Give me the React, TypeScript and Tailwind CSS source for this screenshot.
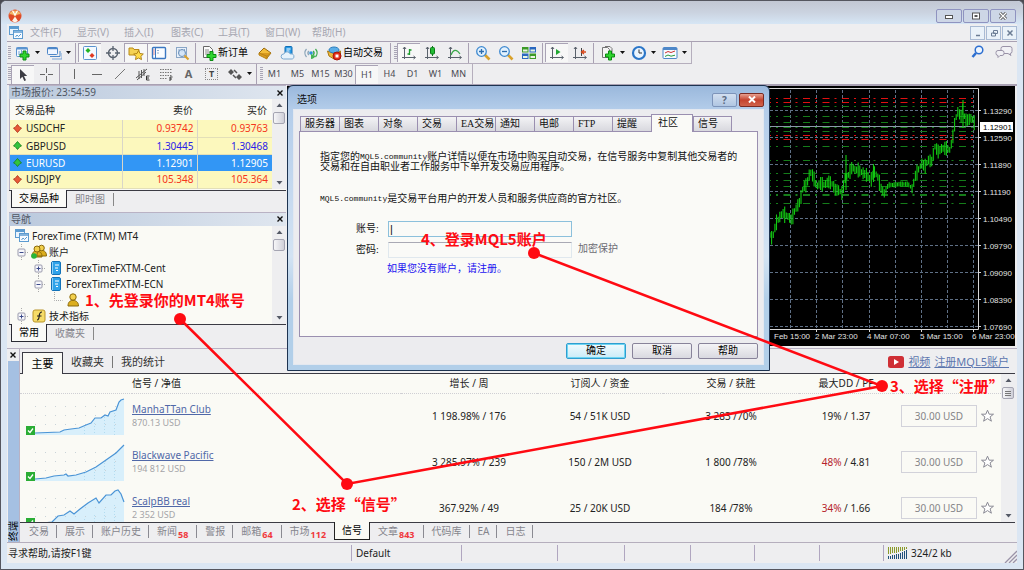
import React from 'react';

type Kids = { children?: React.ReactNode };

/* ---------- small drawing helpers ---------- */

function Ic({ children }: Kids) {
  return (
    <svg width="16" height="16" viewBox="0 0 16 16" fill="none" className="shrink-0" aria-hidden="true">
      {children}
    </svg>
  );
}

const Plus = ({ x, y }: { x: number; y: number }) => (
  <path
    d={`M${x - 1.5} ${y - 4.5}h3v3h3v3h-3v3h-3v-3h-3v-3h3z`}
    fill="#2fd52f"
    stroke="#0b8a12"
    strokeWidth="1"
  />
);

const NewChart = () => (
  <Ic>
    <rect x="1.5" y="2.5" width="11" height="9" rx="1" fill="#f4f9ff" stroke="#5a93cf" />
    <path d="M1.5 3.5h11" stroke="#5a93cf" strokeWidth="2" />
    <path d="M4 10V6M6.500 9V5" stroke="#7aa7d8" />
    <Plus x={9.500} y={10.500} />
  </Ic>
);
const Profiles = () => (
  <Ic>
    <rect x="1.500" y="2.500" width="10" height="7" rx="1" fill="#eef5ff" stroke="#4d87c8" />
    <path d="M1.500 3.500h10" stroke="#4d87c8" strokeWidth="1.500" />
    <path d="M4 11.500h10V6" stroke="#4d87c8" />
    <path d="M6 14h10V8" stroke="#7ba5d6" />
  </Ic>
);
const Quotes = () => (
  <Ic>
    <rect x="1.500" y="1.500" width="13" height="13" rx="1" fill="#f5faff" stroke="#5a93cf" />
    <path d="M6 3l2.500 2.500L6 8 3.500 5.500z" fill="#22b322" />
    <path d="M10 8l2.500 2.500L10 13 7.500 10.500z" fill="#e03a22" />
  </Ic>
);
const Target = () => (
  <Ic>
    <circle cx="8" cy="8" r="4.500" stroke="#5b6470" strokeWidth="1.500" />
    <path d="M8 1v5M8 10v5M1 8h5M10 8h5" stroke="#5b6470" strokeWidth="1.300" />
  </Ic>
);
const FolderStar = () => (
  <Ic>
    <path d="M1 3h4l1 1.500h5V10H1z" fill="#f5d254" stroke="#b98a17" />
    <path d="M10.500 5.500l1.500 3 3.300.5-2.400 2.300.6 3.300-3-1.600-3 1.600.6-3.300L5.700 9l3.300-.5z" fill="#ffdc4a" stroke="#a97a10" strokeWidth=".9" />
  </Ic>
);
const TermIcon = () => (
  <Ic>
    <rect x="1.500" y="2.500" width="13" height="11" rx="1" fill="#fafdff" stroke="#3b78c2" strokeWidth="1.400" />
    <path d="M4.500 3v10" stroke="#3b78c2" />
    <path d="M2.500 5h1M2.500 7h1M2.500 9h1" stroke="#d33" />
    <path d="M6.500 5.500h1M6.500 8h1" stroke="#2c5b9b" />
  </Ic>
);
const Tester = () => (
  <Ic>
    <rect x="2.500" y="2.500" width="10" height="10" fill="#e9f1fa" stroke="#8aa6c6" />
    <path d="M5 4v5M8 4v3M10.500 4v4" stroke="#8aa6c6" />
    <circle cx="8" cy="8" r="3.500" fill="#cfe3f7" fillOpacity=".8" stroke="#6b8fb8" />
    <path d="M10.500 10.500l4 4" stroke="#dba12b" strokeWidth="2.200" />
  </Ic>
);
const NewOrder = () => (
  <Ic>
    <path d="M2.500 1.500h6l3 3v8h-9z" fill="#fbfbfb" stroke="#666" />
    <path d="M4 5h4M4 7h5M4 9h4" stroke="#888" />
    <Plus x={10.500} y={11} />
  </Ic>
);
const Gold = () => (
  <Ic>
    <path d="M2 8l5-5 7 5-4 5z" fill="#f2bd3c" stroke="#9a6b10" />
    <path d="M2 8l8 3.200L14 8M2 8v2l8 4v-3" stroke="#b98317" fill="#d99a20" />
  </Ic>
);
const Cloud = () => (
  <Ic>
    <rect x="5" y="1.500" width="7" height="8" rx="1" fill="#2a9be6" stroke="#0f6db5" />
    <path d="M6.500 4h4M6.500 6h3" stroke="#fff" />
    <path d="M3.500 14a2.500 2.500 0 01.3-5 3.500 3.500 0 016.500 0 2.500 2.500 0 012 5z" fill="#e6f2fb" stroke="#7aa8cf" />
  </Ic>
);
const Signal = () => (
  <Ic>
    <path d="M3.500 12a6 6 0 010-8M5.800 10a3 3 0 010-4" stroke="#8aa4b8" strokeWidth="1.300" />
    <path d="M12.500 12a6 6 0 000-8M10.200 10a3 3 0 000-4" stroke="#3aa84a" strokeWidth="1.300" />
    <circle cx="8" cy="8" r="1.800" fill="#2f93d8" />
    <path d="M8 9v5c2 0 4-1.500 4.500-3z" fill="#46b454" />
  </Ic>
);
const AutoTrade = () => (
  <Ic>
    <path d="M1.500 6L8 8.500 14.500 6v4L8 14 3 11z" fill="#f0b93a" stroke="#a87814" />
    <ellipse cx="8" cy="5" rx="5" ry="3" fill="#5aaee8" stroke="#2b7dbd" />
    <circle cx="11" cy="11" r="4" fill="#e32e1a" stroke="#a81508" />
    <rect x="9.500" y="9.500" width="3" height="3" fill="#fff" />
  </Ic>
);
const Axes = ({ children }: Kids) => (
  <Ic>
    <path d="M3.500 2v12M1 12.500h13M2 4l1.500-2L5 4M12.500 11l2 1.500-2 1.500" stroke="#59616b" />
    {children}
  </Ic>
);
const ZoomIc = ({ plus }: { plus?: boolean }) => (
  <Ic>
    <path d="M9.500 9.500l5 5" stroke="#d9a12a" strokeWidth="2.600" />
    <circle cx="6.500" cy="6.500" r="4.800" fill="#e2f1fd" stroke="#3f8ad0" strokeWidth="1.300" />
    <path d={plus ? 'M4 6.500h5M6.500 4v5' : 'M4 6.500h5'} stroke="#2c6cae" strokeWidth="1.300" />
  </Ic>
);
const Tile = () => (
  <Ic>
    <path d="M1 2h6.500v5.500H1zM8.500 8.500H15V14H8.500z" fill="#3c9a28" />
    <path d="M8.500 2H15v5.500H8.500zM1 8.500h6.500V14H1z" fill="#2a68c0" />
    <path d="M2 4.500h4.500v2H2zM9.500 4.500H14v2H9.500zM2 11h4.500v2H2zM9.500 11H14v2H9.500z" fill="#eaf5e4" />
  </Ic>
);
const Indicators = () => (
  <Ic>
    <path d="M2.500 2.500h5l2 2v8h-7z" fill="#f5f5f5" stroke="#777" />
    <path d="M5 1.500h5l2 2v6" stroke="#777" />
    <Plus x={10} y={10.500} />
  </Ic>
);
const Clock = () => (
  <Ic>
    <circle cx="8" cy="8" r="6" fill="#eaf5ff" stroke="#2b76c8" strokeWidth="2.200" />
    <path d="M8 4.500V8h3" stroke="#333" />
  </Ic>
);
const Template = () => (
  <Ic>
    <rect x="1" y="2.500" width="14" height="11" rx="1" fill="#f7fbff" stroke="#4d87c8" />
    <path d="M1 4h14" stroke="#4d87c8" strokeWidth="2" />
    <path d="M3 8l3-1.500 3 1 4-1.500" stroke="#c33" />
    <path d="M3 11.500l3-1.500 3 1.200 4-1" stroke="#2a9a3a" />
  </Ic>
);
const WinStack = () => (
  <Ic>
    <rect x="1.500" y="1.500" width="9" height="8" fill="#eaf4fd" stroke="#5c9bd0" />
    <path d="M1.500 3h9" stroke="#5c9bd0" strokeWidth="2" />
    <rect x="5.500" y="5.500" width="9" height="8" fill="#f7fbff" stroke="#5c9bd0" />
    <path d="M5.500 7h9" stroke="#5c9bd0" strokeWidth="1.500" />
    <path d="M7.500 12l1.500-2 1.500 1.500L13 9" stroke="#5c9bd0" />
  </Ic>
);

/* ---------- toolbars ---------- */

function Tool({ label, pressed, children }: Kids & { label: string; pressed?: boolean }) {
  return (
    <button
      type="button"
      aria-label={label}
      className={
        'flex h-[19px] w-[23px] shrink-0 items-center justify-center text-[9px] text-[#4a4a52] ' +
        (pressed ? 'border-t border-l border-[#a9a3b5] bg-[#f7f7f7]' : '')
      }
    >
      {children}
    </button>
  );
}
const Caret = () => (
  <svg width="8" height="4" viewBox="0 0 8 4" className="shrink-0" aria-hidden="true">
    <path d="M1 0h5L3.500 3z" fill="#111" />
  </svg>
);
const Sep = () => (
  <span className="flex h-5 w-[5px] shrink-0 justify-center">
    <span className="w-px bg-[#a9a1b3]" />
  </span>
);
const Grip = () => (
  <svg width="4" height="16" viewBox="0 0 4 16" className="shrink-0" aria-hidden="true">
    <path d="M2.500 1v14" stroke="#a9a5b5" strokeWidth="3" strokeDasharray="1 1" />
  </svg>
);

function Toolbars() {
  return (
    <div className="border-t border-b border-[#a9a1b3]">
      <div className="flex h-[22px] w-max items-center border-r border-b border-[#b5aebd] pr-0.5">
        <Grip />
        <Tool label="新图表"><NewChart /></Tool>
        <Caret />
        <Tool label="配置文件"><Profiles /></Tool>
        <Caret />
        <Sep />
        <Tool label="市场报价" pressed><Quotes /></Tool>
        <Tool label="数据窗口"><Target /></Tool>
        <Tool label="导航" pressed><FolderStar /></Tool>
        <Tool label="终端" pressed><TermIcon /></Tool>
        <Tool label="策略测试"><Tester /></Tool>
        <Sep />
        <button type="button" className="flex w-[55px] shrink-0 items-center gap-px pl-[3px] text-[10px] text-black">
          <NewOrder />
          <span className="whitespace-nowrap">新订单</span>
        </button>
        <Tool label="MetaEditor"><Gold /></Tool>
        <Tool label="MQL5"><Cloud /></Tool>
        <Tool label="信号服务"><Signal /></Tool>
        <button type="button" className="flex w-[66px] shrink-0 items-center gap-px pl-1 text-[10px] text-black">
          <AutoTrade />
          <span className="whitespace-nowrap">自动交易</span>
        </button>
        <Sep />
        <Grip />
        <Tool label="柱状图" pressed><Axes><path d="M8.500 4v6M8.500 5h2M6.500 9h2" stroke="#1a9c2a" strokeWidth="1.300" /></Axes></Tool>
        <Tool label="阴阳烛"><Axes><path d="M8.500 1v10" stroke="#0c7a18" /><rect x="6.500" y="2.500" width="4" height="6.500" rx="1" fill="#22bb33" stroke="#0c7a18" /></Axes></Tool>
        <Tool label="折线图"><Axes><path d="M4 10c2-5 5-7 9-1" stroke="#3aa84a" strokeWidth="1.200" /></Axes></Tool>
        <Sep />
        <Tool label="放大"><ZoomIc plus /></Tool>
        <Tool label="缩小"><ZoomIc /></Tool>
        <Tool label="平铺窗口"><Tile /></Tool>
        <Sep />
        <Tool label="自动滚动" pressed><Axes><path d="M7 4l4.500 3L7 10z" fill="#22a833" /></Axes></Tool>
        <Tool label="图表平移"><Axes><path d="M9.500 3v8" stroke="#444" /><path d="M14 7h-4M12 5L9.500 7l2.500 2" stroke="#d9491c" strokeWidth="1.300" /></Axes></Tool>
        <Sep />
        <Tool label="指标"><Indicators /></Tool>
        <Caret />
        <Tool label="周期"><Clock /></Tool>
        <Caret />
        <Tool label="模板"><Template /></Tool>
        <Caret />
      </div>
      <div className="flex h-5 w-max items-center border-r border-[#b5aebd] pr-0.5">
        <Grip />
        <Tool label="光标" pressed><Ic><path d="M5 2v10l2.400-2.300L9.300 14l1.700-.8-2-4.100h3.200z" fill="#3c3c44" /></Ic></Tool>
        <Tool label="十字"><Ic><path d="M8.500 2v5M8.500 10v5M2 8.500h5M10 8.500h5" stroke="#666" /></Ic></Tool>
        <Sep />
        <Tool label="垂直线"><Ic><path d="M8.500 3v10" stroke="#666" /></Ic></Tool>
        <Tool label="水平线"><Ic><path d="M3 8.500h10" stroke="#666" /></Ic></Tool>
        <Tool label="趋势线"><Ic><path d="M3 13L13 3" stroke="#777" /></Ic></Tool>
        <Tool label="通道"><Ic><path d="M1 12l11-9M2 14l9-8M4 5v8M6.500 4v8M9 3v7" stroke="#555" /><path d="M14.500 10h-3v4h3M11.500 12H14" stroke="#222" strokeWidth=".9" /></Ic></Tool>
        <Tool label="斐波纳契"><Ic><path d="M2 3.500h12M2 6.500h12M2 9.500h12M2 12.500h7" stroke="#777" strokeDasharray="1.500 1" /><path d="M14.500 11H12v4M12 13h2" stroke="#222" strokeWidth=".9" /></Ic></Tool>
        <Tool label="文字"><span className="text-[11px] font-bold text-[#666]">A</span></Tool>
        <Tool label="文字标签"><span className="border border-dotted border-[#888] px-[3px] text-[9px] leading-[10px] font-bold text-[#444]">T</span></Tool>
        <Tool label="箭头"><Ic><path d="M4 3l3 3-3 3-3-3zM12 8l3 3-3 3-3-3z" fill="#555" /><path d="M7 4l3 3M6 9l3 3" stroke="#555" strokeWidth="1.500" /></Ic></Tool>
        <Caret />
        <Sep />
        <Grip />
        {['M1', 'M5', 'M15', 'M30', 'H1', 'H4', 'D1', 'W1', 'MN'].map((p) => (
          <Tool key={p} label={p} pressed={p === 'H1'}>{p}</Tool>
        ))}
      </div>
    </div>
  );
}

/* ---------- shared panel pieces ---------- */

function PanelHead({ title }: { title: string }) {
  return (
    <div className="flex h-[14px] items-center justify-between border-t border-[#b9b2c4] bg-[linear-gradient(90deg,#bac9dd,#dfe6ef)] pl-0.5 text-[10px] text-[#4f5663]">
      <span>{title}</span>
      <CloseX />
    </div>
  );
}
const CloseX = () => (
  <button type="button" aria-label="关闭" className="flex h-3 w-3 shrink-0 items-center justify-center">
    <svg width="6" height="6" viewBox="0 0 6 6" aria-hidden="true">
      <path d="M.5 .5l5 5M5.500 .5l-5 5" stroke="#111" strokeWidth="1.400" />
    </svg>
  </button>
);
function ScrollBar({ lines }: { lines?: boolean }) {
  return (
    <div className="flex w-[14px] shrink-0 flex-col items-center justify-between bg-[#eeeef0] py-1" aria-hidden="true">
      <div className="flex flex-col items-center gap-[5px]">
        <svg width="7" height="4" viewBox="0 0 7 4"><path d="M.5 4L3.500 .5l3 3.500z" fill="#555a66" /></svg>
        <div className="flex h-3 w-3 flex-col items-center justify-center gap-px rounded-[2px] border border-[#a5a5b2] bg-[linear-gradient(90deg,#f6f6f8,#cfcfd8)]">
          {lines && <><i className="h-px w-1.5 bg-[#777]" /><i className="h-px w-1.5 bg-[#777]" /><i className="h-px w-1.5 bg-[#777]" /></>}
        </div>
      </div>
      <svg width="7" height="4" viewBox="0 0 7 4"><path d="M.5 0h6l-3 3.500z" fill="#555a66" /></svg>
    </div>
  );
}
function SmallTabs({ active, other }: { active: string; other: string }) {
  return (
    <div className="flex h-[18px] border-t border-[#3b3b44] pl-0.5 text-[10px]">
      <button type="button" className="-mt-px border-x border-b border-[#2b2b34] bg-[#fafaf7] px-[7px] leading-4 text-black">{active}</button>
      <button type="button" className="my-0.5 border-r border-[#888] px-2 leading-3 text-[#85858d]">{other}</button>
    </div>
  );
}

const quotes = [
  { s: 'USDCHF', bid: '0.93742', ask: '0.93763', up: false, tone: 'text-[#f5361c]' },
  { s: 'GBPUSD', bid: '1.30445', ask: '1.30468', up: true, tone: 'text-[#2a22e8]' },
  { s: 'EURUSD', bid: '1.12901', ask: '1.12905', up: true, tone: 'text-white', sel: true },
  { s: 'USDJPY', bid: '105.348', ask: '105.364', up: false, tone: 'text-[#f5361c]' },
];

function MarketWatch() {
  return (
    <section>
      <PanelHead title="市场报价: 23:54:59" />
      <div className="flex border-l border-[#b9b2c4] bg-[#fafaf5] pb-px">
        <table className="flex-1 table-fixed border-collapse text-[10px] leading-4">
          <thead>
            <tr className="h-[21px] text-[#222]">
              <th className="w-[112px] pl-[5px] text-left font-normal">交易品种</th>
              <th className="w-[75px] pr-1 text-right font-normal">卖价</th>
              <th className="w-[75px] pr-[5px] text-right font-normal">买价</th>
            </tr>
          </thead>
          <tbody>
            {quotes.map((q) => (
              <tr key={q.s} className={q.sel ? 'h-[17px] bg-[#3296f5] text-white' : 'h-[17px] border-b border-[#e3dfb8] bg-[#fcf8bd] text-[#222]'}>
                <td className="p-0 pl-[3px]">
                  <span className="flex items-center gap-1">
                    <svg width="9" height="9" viewBox="0 0 9 9" aria-hidden="true">
                      <path
                        d={q.up ? 'M4.500 .5L8.500 5 7 5.500 4.500 8.500 2 5.500.5 5z' : 'M4.500 8.500L8.500 4 7 3.500 4.500.5 2 3.500.5 4z'}
                        fill={q.up ? '#33c43c' : '#e85a38'}
                        stroke={q.up ? '#157d1d' : '#a8301a'}
                        strokeWidth=".8"
                      />
                    </svg>
                    {q.s}
                  </span>
                </td>
                <td className={'border-l border-[#d9d6c8] p-0 pr-[3px] text-right ' + q.tone}>{q.bid}</td>
                <td className={'border-l border-[#d9d6c8] p-0 pr-1 text-right ' + q.tone}>{q.ask}</td>
              </tr>
            ))}
          </tbody>
        </table>
        <ScrollBar />
      </div>
      <SmallTabs active="交易品种" other="即时图" />
    </section>
  );
}

const Toggle = ({ open }: { open?: boolean }) => (
  <svg width="16" height="16" viewBox="0 0 16 16" fill="none" className="shrink-0" aria-hidden="true">
    <path d="M8.500 0v4M8.500 13v3M12 8.500h4" stroke="#aaa" strokeDasharray="1 1" />
    <rect x="5" y="5" width="7" height="7" rx="1" fill="#f7f7fb" stroke="#9a9aac" />
    <path d={open ? 'M6.500 8.500h4' : 'M6.500 8.500h4M8.500 6.500v4'} stroke="#3b4a8a" />
  </svg>
);
const Server = () => (
  <Ic>
    <rect x="3.500" y="1.500" width="9" height="13" rx="1.500" fill="#2ea3ea" stroke="#1272b8" />
    <path d="M4.500 2v12" stroke="#8fd0f7" />
    <path d="M7 5h4M7 8h3M8 10.500h2" stroke="#fff" strokeWidth="1.200" />
  </Ic>
);
const Person = () => (
  <Ic>
    <path d="M3 14c0-4 2-5 3.500-5.500h3C11 9 13.500 10 13.500 14z" fill="#dcae1e" stroke="#8b6a0c" />
    <circle cx="8" cy="5" r="3.200" fill="#f2d04c" stroke="#8b6a0c" />
  </Ic>
);
const People = () => (
  <Ic>
    <path d="M6 12c0-4 2-5 3-5.500h3c2 .5 3.500 2 3.500 5.500zM1 13c0-4 1-5 2.500-5.500h4C9.500 8 11 9 11 13z" fill="#dcae1e" stroke="#8b6a0c" />
    <circle cx="10.500" cy="4" r="2.800" fill="#f2d04c" stroke="#8b6a0c" />
    <circle cx="6" cy="5" r="3" fill="#f2d04c" stroke="#8b6a0c" />
    <circle cx="3" cy="12" r="2.800" fill="#26b53a" />
  </Ic>
);

function Navigator() {
  return (
    <section>
      <PanelHead title="导航" />
      <div className="flex h-[98px] border-l border-[#b9b2c4] bg-[#fafaf5]">
        <ul className="flex-1 overflow-hidden pt-0.5 text-[10px] leading-4 text-[#222] [&>li]:flex [&>li]:h-[16px] [&>li]:items-center [&>li]:gap-0.5">
          <li className="pl-1"><WinStack />ForexTime (FXTM) MT4</li>
          <li className="pl-[3px]"><Toggle open /><People />账户</li>
          <li className="pl-5"><Toggle /><Server />ForexTimeFXTM-Cent</li>
          <li className="pl-5"><Toggle open /><Server />ForexTimeFXTM-ECN</li>
          <li className="pl-[44px]">
            <svg width="9" height="16" viewBox="0 0 9 16" aria-hidden="true"><path d="M.5 0v8.500h8" fill="none" stroke="#aaa" strokeDasharray="1 1" /></svg>
            <Person />
          </li>
          <li className="pl-[3px]">
            <Toggle />
            <Ic><rect x="2" y="2" width="12" height="12" rx="2" fill="#f6dc68" stroke="#b9952a" /><path d="M6 12c1.500 0 2-1 2.200-4S9.500 4 11 4M6 8h4.500" stroke="#222" strokeWidth="1.200" /></Ic>
            技术指标
          </li>
        </ul>
        <ScrollBar />
      </div>
      <SmallTabs active="常用" other="收藏夹" />
    </section>
  );
}

/* ---------- price chart ---------- */

const mids: [number, number][] = [
  [15, 450], [22, 462], [27, 440], [33, 415], [45, 395], [52, 385], [60, 390], [70, 395], [80, 405], [90, 375], [105, 350],
  [115, 305], [125, 300], [135, 260], [145, 275], [155, 305], [165, 295], [178, 300], [190, 290], [200, 295], [212, 315],
  [220, 315], [232, 325], [240, 280], [250, 270], [262, 245], [270, 255], [280, 255], [295, 265], [305, 270], [318, 285],
  [328, 260], [338, 275], [348, 310], [358, 325], [370, 300], [385, 300], [400, 298], [415, 297], [430, 298], [442, 312],
  [450, 275], [460, 255], [470, 235], [480, 245], [490, 225], [500, 230], [510, 185], [520, 200], [530, 190], [545, 190],
  [555, 195], [563, 160], [570, 110], [578, 80], [588, 95], [594, 70], [600, 105], [610, 105], [620, 98], [627, 112],
];
function bars() {
  let d = '';
  for (let i = 0; i < 126; i++) {
    const x = 15 + i * 4.9;
    let k = 0;
    while (k < mids.length - 2 && mids[k + 1][0] < x) k++;
    const [x0, y0] = mids[k];
    const [x1, y1] = mids[k + 1];
    const m = y0 + ((y1 - y0) * (x - x0)) / (x1 - x0);
    const calm = x > 365 && x < 440;
    const a = calm ? 5 + 3 * Math.abs(Math.sin(i * 2.3)) : 8 + 17 * Math.abs(Math.sin(i * 1.9) * Math.cos(i * 0.7));
    const px = 765 + x / 3;
    d += `M${px.toFixed(1)} ${(85 + (m - a) / 3).toFixed(1)}V${(85 + (m + a) / 3).toFixed(1)}`;
  }
  return d + 'M846 155V190M963 100V128M873.500 164V182';
}
const vGrid = [790.5, 816.5, 842.5, 869.5, 895.5, 921.5, 947.5, 973.5];
const hGrid = [110.5, 137.5, 164.5, 191.5, 218.5, 245.5, 272.5, 299.5, 326.5];
const prices = ['1.13290', '1.12590', '1.11890', '1.11190', '1.10490', '1.09790', '1.09090', '1.08390', '1.07690'];
const green = [106.5, 116.5, 122.5, 127.5, 131.5, 146.5, 160.5, 173.5, 180.5, 186.5, 194.5, 195.5, 203.5];
const red = [98.5, 102.5, 135.5, 139.5];

function PriceChart() {
  return (
    <div className="flex flex-1 justify-end overflow-hidden bg-black">
      <svg width="250" height="260" viewBox="765 86 250 260" className="shrink-0 font-['Liberation_Sans',sans-serif] text-[8px]">
        <path d={vGrid.map((x) => `M${x} 90V329`).join('')} stroke="#5f7086" strokeDasharray="3 2" />
        <path d={hGrid.map((y) => `M765 ${y}H978`).join('')} stroke="#5f7086" strokeDasharray="3 2" />
        <path d={green.map((y) => `M764 ${y}H976`).join('')} stroke="#157d1a" strokeDasharray="7 5 2 5.500" />
        <path d={red.map((y) => `M764 ${y}H976`).join('')} stroke="#e01010" strokeDasharray="7 5 2 5.500" />
        <path d="M765 126.500H978" stroke="#8a99a8" />
        <path d={bars()} stroke="#12c812" strokeWidth="1.100" />
        <path d="M765 88.500H978.500V329.500H765" fill="none" stroke="#d8d8d8" />
        <path d={hGrid.map((y) => `M979 ${y}h2`).join('') + [816.5, 869.5, 921.5, 973.5].map((x) => `M${x} 330v2`).join('')} stroke="#d8d8d8" />
        {prices.map((p, i) => (
          <text key={p} x="983" y={hGrid[i] + 3} fill="#e2e2e2">{p}</text>
        ))}
        <rect x="980" y="122" width="33" height="10" fill="#fff" />
        <text x="983" y="130" fill="#000">1.12901</text>
        <g fill="#e2e2e2">
          <text x="774" y="339">Feb 15:00</text>
          <text x="815" y="339">2 Mar 23:00</text>
          <text x="867" y="339">4 Mar 07:00</text>
          <text x="920" y="339">5 Mar 15:00</text>
          <text x="972" y="339">6 Mar 23:00</text>
        </g>
      </svg>
    </div>
  );
}

/* ---------- terminal ---------- */

const signals = [
  { n: 'ManhaTTan Club', b: '870.13 USD', g: '1 198.98% / 176', s: '54 / 51K USD', t: '3 283 /70%', dd: '19%', pf: ' / 1.37', hot: false,
    line: 'M9 36L34 35 38 33 45 32 53 31 60 28 65 26 69 21 75 21 79 18 82 19 84 15 90 13 93 5 95 3 98 2' },
  { n: 'Blackwave Pacific', b: '194 812 USD', g: '3 285.97% / 239', s: '150 / 2M USD', t: '1 800 /78%', dd: '48%', pf: ' / 4.81', hot: true,
    line: 'M9 36L20 35 28 33 38 32 40 31 42 33 50 32 60 29 70 24 80 17 90 10 98 2' },
  { n: 'ScalpBB real', b: '2 352 USD', g: '367.92% / 49', s: '25 / 20K USD', t: '184 /78%', dd: '34%', pf: ' / 1.66', hot: true,
    line: 'M9 35L18 34 26 33 32 27 38 26 44 22 48 25 54 20 62 14 70 9 73 14 80 6 85 6 89 2 92 1 95 5 98 13' },
];

const Check = () => (
  <svg width="9" height="9" viewBox="0 0 9 9" className="absolute bottom-0 left-0" aria-hidden="true">
    <rect width="9" height="9" fill="#2aad35" />
    <path d="M2 4.500l2 2 3-4" fill="none" stroke="#fff" strokeWidth="1.300" />
  </svg>
);

function SignalTable() {
  return (
    <table className="h-max flex-1 table-fixed border-collapse text-[10px] text-[#222]">
      <colgroup>
        <col className="w-[112px]" /><col /><col className="w-[136px]" /><col className="w-[126px]" />
        <col className="w-[136px]" /><col className="w-[94px]" /><col className="w-[84px]" /><col className="w-[24px]" />
      </colgroup>
      <thead>
        <tr className="h-[19px] border-b border-dotted border-[#cfcfd4] [&>th]:p-0 [&>th]:font-normal">
          <th /><th className="text-left">信号 / 净值</th><th>增长 / 周</th><th>订阅人 / 资金</th><th>交易 / 获胜</th><th>最大DD / PF</th><th /><th />
        </tr>
      </thead>
      <tbody>
        {signals.map((r) => (
          <tr key={r.n} className="h-[46px] text-center [&>td]:py-0 [&>td]:pr-0">
            <td>
              <div className="relative ml-1.5 w-[99px]">
                <svg width="99" height="38" viewBox="0 0 99 38" className="block" aria-hidden="true">
                  <path d={r.line + 'V38H9z'} fill="#d8effb" />
                  <path d="M9 9.500h90M9 18.500h90M9 27.500h90" stroke="#c9d3d8" strokeDasharray="1 9" />
                  <path d="M58.500 30v8M68.500 26v12M78.500 20v18M88.500 16v22" stroke="#b3dcf0" strokeDasharray="1 2" />
                  <path d={r.line} fill="none" stroke="#4a94d6" strokeWidth="1.200" />
                </svg>
                <Check />
              </div>
            </td>
            <td className="text-left leading-[14px]">
              <a href="#signal" className="text-[#5068a8] underline">{r.n}</a>
              <div className="text-[9px] text-[#a5a5a8]">{r.b}</div>
            </td>
            <td>{r.g}</td>
            <td>{r.s}</td>
            <td>{r.t}</td>
            <td><span className={r.hot ? 'text-[#b5222c]' : ''}>{r.dd}</span>{r.pf}</td>
            <td className="pl-2 text-left">
              <button type="button" className="h-[22px] w-[76px] border border-[#d2d2da] text-[#858588]">30.00 USD</button>
            </td>
            <td className="pl-[3px]">
              <button type="button" aria-label="收藏" className="block">
                <svg width="15" height="14" viewBox="0 0 15 14" aria-hidden="true">
                  <path d="M7.500 1.200l1.700 4h4.300l-3.400 2.700 1.300 4.300-3.900-2.600-3.900 2.600 1.300-4.300L1.500 5.200h4.300z" fill="#fff" stroke="#8a8a94" />
                </svg>
              </button>
            </td>
          </tr>
        ))}
      </tbody>
    </table>
  );
}

const bottomTabs: { t: string; n?: string; on?: boolean }[] = [
  { t: '交易' }, { t: '展示' }, { t: '账户历史' }, { t: '新闻', n: '58' }, { t: '警报' }, { t: '邮箱', n: '64' },
  { t: '市场', n: '112' }, { t: '信号', on: true }, { t: '文章', n: '843' }, { t: '代码库' }, { t: 'EA' }, { t: '日志' },
];

function Terminal() {
  return (
    <section className="flex h-[194px] border-t border-[#b9b2c4] pr-0.5">
      <div className="flex w-3 flex-col items-center">
        <CloseX />
        <div className="flex w-[11px] flex-1 items-end justify-center bg-[#a5c0e2] pb-px">
          <span className="rotate-180 text-[10px] leading-[11px] text-black [text-orientation:sideways] [writing-mode:vertical-rl]">终端</span>
        </div>
      </div>
      <div className="flex min-w-0 flex-1 flex-col border-l border-[#b9b2c4]">
        <div className="flex h-[25px] items-end border-b border-[#3b3b44] pl-0.5 text-[11px]">
          <button type="button" className="-mb-px h-[22px] w-[41px] border-x border-t border-[#3b3b44] bg-[#fafaf5] leading-5 text-black">主要</button>
          <button type="button" className="h-[22px] px-2 text-[#333]">收藏夹</button>
          <span className="mb-[5px] h-3 w-px bg-[#777]" />
          <button type="button" className="h-[22px] px-2 text-[#333]">我的统计</button>
          <div className="mr-1.5 ml-auto flex h-[22px] items-center gap-1 text-[#5c76ae]">
            <svg width="16" height="12" viewBox="0 0 16 12" aria-hidden="true">
              <rect width="16" height="12" rx="2.500" fill="#cf2f35" /><path d="M6 3l5 3-5 3z" fill="#fff" />
            </svg>
            <a href="#video" className="underline">视频</a>
            <a href="#register" className="underline">注册MQL5账户</a>
          </div>
        </div>
        <div className="flex min-h-0 flex-1 overflow-hidden border-b border-[#3b3b44] bg-[#fafaf5]">
          <SignalTable />
          <ScrollBar lines />
        </div>
        <div className="flex h-[19px] items-start pl-px text-[10px] leading-[15px] text-[#85858d]">
          {bottomTabs.map((b, i) => (
            <button
              key={b.t}
              type="button"
              className={
                b.on
                  ? '-mt-px h-[18px] border-x border-b border-[#222] bg-[#fafaf5] px-[7px] text-black'
                  : 'mt-0.5 flex h-[13px] items-center gap-px pl-2 ' + (b.n ? 'pr-2 ' : 'pr-[7px] ') + (i === 6 ? '' : 'border-r border-[#8a8a92]')
              }
            >
              {b.t}
              {b.n && <span className="mt-1.5 text-[9px] font-bold text-[#f0383c]">{b.n}</span>}
            </button>
          ))}
        </div>
      </div>
    </section>
  );
}

/* ---------- options dialog ---------- */

const En = ({ children }: Kids) => <span className="align-top font-['Liberation_Mono',monospace] text-[8px]">{children}</span>;

const dlgTabs = ['服务器', '图表', '对象', '交易', 'EA交易', '通知', '电邮', 'FTP', '提醒', '社区', '信号'];

function DialogBtn({ children, main }: Kids & { main?: boolean }) {
  return (
    <button
      type="button"
      className={
        'h-4 w-[60px] rounded-[2px] border text-[10px] leading-[14px] text-black ' +
        (main
          ? 'border-[#2f9ed0] bg-[linear-gradient(#f2fafd,#c9ecf8)] ring-1 ring-inset ring-[#6fd5f2]'
          : 'border-[#88839a] bg-[linear-gradient(#f4f4f6,#d9d9e0)]')
      }
    >
      {children}
    </button>
  );
}

function OptionsDialog() {
  return (
    <div
      role="dialog"
      aria-label="选项"
      className="absolute top-[85px] left-[287px] z-10 w-[483px] rounded-t-md border border-[#1d3350] bg-[linear-gradient(#9ab8dc,#b4cdea_24px,#d3e3f3_60%,#b2cfe9_75%,#b2cfe9)] px-[5px] pb-[5px] text-[10px] text-[#111] font-['Liberation_Serif','Noto_Sans_CJK_SC',sans-serif]"
    >
      <div className="flex h-[23px] items-center justify-between pl-1">
        <h2 className="pt-1">选项</h2>
        <div className="flex gap-0.5 pt-1">
          <button type="button" aria-label="帮助" className="h-[14px] w-[25px] rounded-[2px] border border-[#7d94ba] bg-[linear-gradient(#d2dff0,#b0c6e2)] font-['Noto_Sans',sans-serif] text-[10px] leading-3 font-bold text-[#5b6a80]">?</button>
          <button type="button" aria-label="关闭" className="flex h-[14px] w-[25px] items-center justify-center rounded-[2px] border border-[#7a2a22] bg-[linear-gradient(#e8a090,#c5432e_50%,#d0634c)]">
            <svg width="8" height="7" viewBox="0 0 8 7"><path d="M1 .5l6 6M7 .5l-6 6" stroke="#fff" strokeWidth="2" /></svg>
          </button>
        </div>
      </div>
      <div className="border border-[#e3e8f0] bg-[#ececef] px-[5px] pt-1 pb-[5px]">
        <div className="flex items-end pl-px">
          {dlgTabs.map((t) => (
            <button
              key={t}
              type="button"
              className={
                t === '社区'
                  ? 'relative z-10 -mb-px h-[18px] w-[42px] border-x border-t border-[#9a8fb0] bg-[#fafaf7] pb-0.5 pl-1.5 text-left leading-4'
                  : 'h-[15px] w-[39px] border-t border-l border-[#9a8fb0] bg-[linear-gradient(#f3f3f5,#d8d8de)] pl-1 text-left leading-[14px] whitespace-nowrap last:border-r'
              }
            >
              {t}
            </button>
          ))}
        </div>
        <div className="h-[206px] border border-[#9a8fb0] bg-[#fafaf7] pt-5 pr-1 pl-5">
          <p className="leading-[10px]">
            指定您的<En>MQL5.community</En>账户详情以便在市场中购买自动交易，在信号服务中复制其他交易者的
            <br />
            交易和在自由职业者工作服务中下单开发交易应用程序。
          </p>
          <p className="mt-[22px] leading-[10px]"><En>MQL5.community</En>是交易平台用户的开发人员和服务供应商的官方社区。</p>
          <div className="mt-[17px] grid grid-cols-[68px_184px_auto] gap-y-[5px]">
            <label htmlFor="acc" className="pl-9 leading-4">账号:</label>
            <input id="acc" type="text" defaultValue="|" className="h-4 w-full border border-[#8cc0dc] bg-transparent pl-px text-[11px] leading-3 outline-none font-['Liberation_Sans',sans-serif]" />
            <span />
            <label htmlFor="pwd" className="pl-9 leading-4">密码:</label>
            <input id="pwd" type="password" className="h-4 w-full border border-[#e0e8ee] border-t-[#a9a9b4] bg-transparent outline-none" />
            <span className="pl-1.5 leading-[14px] text-[#6b6b73]">加密保护</span>
          </div>
          <a href="#signup" className="mt-[5px] ml-[67px] block leading-[12px] text-[#1b12f0]">如果您没有账户，请注册。</a>
        </div>
        <div className="mt-1.5 flex justify-end gap-1.5">
          <DialogBtn main>确定</DialogBtn>
          <DialogBtn>取消</DialogBtn>
          <DialogBtn>帮助</DialogBtn>
        </div>
      </div>
    </div>
  );
}

/* ---------- tutorial notes drawn over the window ---------- */

function Notes() {
  return (
    <div className="pointer-events-none absolute inset-0 z-20 text-[15px] leading-[18px] font-bold whitespace-nowrap text-[#ff0a12] font-['Noto_Sans_CJK_SC',sans-serif]">
      <svg width="1024" height="570" viewBox="0 0 1024 570" className="absolute top-0 left-0" aria-hidden="true">
        <path d="M180 319L347 484L882 386L534 253" fill="none" stroke="#ff0a12" strokeWidth="2.500" />
        {[[180, 319], [347, 484], [882, 386], [534, 253]].map(([x, y]) => (
          <circle key={x} cx={x} cy={y} r="6" fill="#ff0a12" />
        ))}
      </svg>
      <span className="absolute top-[291px] left-[85px]">1、先登录你的MT4账号</span>
      <span className="absolute top-[495px] left-[292px]">2、选择“信号”</span>
      <span className="absolute top-[377px] left-[890px]">3、选择“注册”</span>
      <span className="absolute top-[230px] left-[421px]">4、登录MQL5账户</span>
    </div>
  );
}

/* ---------- window ---------- */

const menus = ['文件(F)', '显示(V)', '插入(I)', '图表(C)', '工具(T)', '窗口(W)', '帮助(H)'];

function WinBtn({ label, children, small }: Kids & { label: string; small?: boolean }) {
  return (
    <button
      type="button"
      aria-label={label}
      className={
        small
          ? 'flex h-[14px] w-[15px] items-center justify-center border border-[#a9bbd4] bg-[#eaf2f9]'
          : 'flex h-[14px] w-[26px] items-center justify-center rounded-[2px] border border-[#8f93c0] bg-[#cdd6e6]'
      }
    >
      <svg width="10" height="8" viewBox="0 0 10 8" fill="none" aria-hidden="true">{children}</svg>
    </button>
  );
}

export default function App() {
  return (
    <div className="relative min-h-screen w-full overflow-hidden bg-[#4a4a52] font-['Noto_Sans','Noto_Sans_CJK_SC',sans-serif]" lang="zh-CN">
      <div className="flex min-h-screen flex-col rounded-t-md border border-[#55565f] bg-[#dbe6f3] px-1.5">
        <header className="-mx-1.5 flex h-[23px] items-center justify-between rounded-t-md bg-[linear-gradient(#c2c7d3,#cbd3e0_50%,#d6e6f5)] px-[7px]">
          <svg width="14" height="14" viewBox="0 0 14 14" className="mt-1.5" aria-label="MT4">
            <circle cx="7" cy="7" r="6.500" fill="#e04a26" />
            <path d="M1 5.500a6.500 6.500 0 0112 0c-2.500-.8-4.500.2-6 2-1.500-1.800-3.500-2.800-6-2z" fill="#f2b668" />
            <path d="M4.500 1.500L7 6l2.500-4.500" stroke="#fff" strokeWidth="1.200" fill="none" />
            <path d="M4 12l3-4.500 3 4.500-3 1.500z" fill="#fff3e6" />
          </svg>
          <div className="mt-1.5 flex gap-px">
            <WinBtn label="最小化"><rect x="1.500" y="3.500" width="7" height="3" fill="#fff" stroke="#555" /></WinBtn>
            <WinBtn label="最大化"><rect x="1.500" y="1" width="7" height="6" fill="#fff" stroke="#555" /><rect x="4" y="3.500" width="2" height="1" stroke="#555" /></WinBtn>
            <WinBtn label="关闭"><path d="M2 1l6 6M8 1L2 7" stroke="#555" strokeWidth="3" /><path d="M2 1l6 6M8 1L2 7" stroke="#fff" strokeWidth="1.200" /></WinBtn>
          </div>
        </header>

        <div className="flex flex-1 flex-col bg-[#eeeef0]">
          <nav className="flex h-[17px] items-center pl-px text-[10px] text-[#a6a6b0]">
            <WinStack />
            <div className="flex pl-1.5">
              {menus.map((m) => (
                <button key={m} type="button" className="w-[47px] text-left whitespace-nowrap">{m}</button>
              ))}
            </div>
            <div className="ml-auto flex gap-px">
              <WinBtn small label="最小化窗口"><path d="M3 6.500h4" stroke="#6b7c94" strokeWidth="1.500" /></WinBtn>
              <WinBtn small label="还原窗口"><path d="M4.500 1.500h4v3h-4zM2.500 4h4v3h-4z" fill="#eaf2f9" stroke="#6b7c94" /></WinBtn>
              <WinBtn small label="关闭窗口"><path d="M2.500 1.500l5 5M7.500 1.500l-5 5" stroke="#6b7c94" strokeWidth="1.500" /></WinBtn>
            </div>
          </nav>

          <div className="relative">
            <Toolbars />
            <div className="absolute top-[3px] right-1 flex gap-2.5">
              <svg width="14" height="16" viewBox="0 0 14 16" aria-label="搜索">
                <circle cx="8" cy="6" r="3.800" fill="#eef6ff" stroke="#2c6ed0" strokeWidth="1.500" /><path d="M5 9l-3.500 4" stroke="#2c6ed0" strokeWidth="2.500" />
              </svg>
              <svg width="18" height="16" viewBox="0 0 18 16" fill="#f1f1f5" stroke="#9a93a8" aria-label="聊天">
                <path d="M8 2.500h7a2 2 0 012 2v3a2 2 0 01-2 2l1 2-3-2H8a2 2 0 01-2-2v-3a2 2 0 012-2z" />
                <path d="M3 6.500h4a2 2 0 012 2v1a2 2 0 01-2 2H5l-2 2v-2a2 2 0 01-2-2v-1a2 2 0 012-2z" />
              </svg>
            </div>
          </div>

          <main className="flex h-[263px]">
            <div className="flex w-[280px] shrink-0 flex-col gap-1 pr-px pl-[2px]">
              <MarketWatch />
              <Navigator />
            </div>
            <div className="flex min-w-0 flex-1 items-start border-t border-[#a9a1b3] pr-0.5">
              <PriceChart />
            </div>
          </main>

          <Terminal />

          <footer className="flex flex-1 items-center border-t border-[#b5aebd] text-[10px] text-[#222]">
            <span className="w-[344px] pl-px">寻求帮助,请按F1键</span>
            <span className="w-[110px] border-l border-[#b0a6c0] pl-1 leading-4">Default</span>
            <span className="h-4 w-[96px] border-l border-[#b0a6c0]" />
            <span className="h-4 w-[67px] border-l border-[#b0a6c0]" />
            <span className="h-4 w-[66px] border-l border-[#b0a6c0]" />
            <span className="h-4 w-[64px] border-l border-[#b0a6c0]" />
            <span className="h-4 w-[65px] border-l border-[#b0a6c0]" />
            <span className="h-4 w-[64px] border-l border-[#b0a6c0]" />
            <span className="flex items-center gap-1 border-l border-[#b0a6c0] pl-1 leading-4">
              <svg width="19" height="12" viewBox="0 0 19 12" shapeRendering="crispEdges" aria-hidden="true">
                <path d="M.5 0v7M2.500 0v7M4.500 0v6M6.500 0v6M8.500 0v6M10.500 0v5M12.500 0v4M14.500 0v4M16.500 0v3M18.500 0v2" stroke="#8a9a2a" />
                <path d="M.5 9v3M2.500 9v3M4.500 8v4M6.500 8v4M8.500 7v5M10.500 7v5M12.500 6v6M14.500 5v7M16.500 4v8M18.500 3v9" stroke="#1f4f7a" />
              </svg>
              324/2 kb
            </span>
            <svg width="13" height="13" viewBox="0 0 13 13" className="ml-auto self-end" aria-hidden="true">
              <path d="M1 13L13 1M5 13l8-8M9 13l4-4" stroke="#9a93a8" strokeWidth="1.300" />
            </svg>
          </footer>
        </div>
        <div className="h-[6px]" />
      </div>
      <OptionsDialog />
      <Notes />
    </div>
  );
}
